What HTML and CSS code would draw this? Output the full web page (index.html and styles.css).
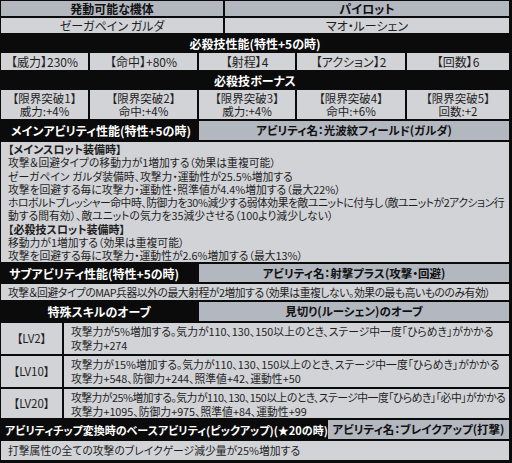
FILE: index.html
```html
<!DOCTYPE html>
<html lang="ja">
<head>
<meta charset="utf-8">
<link rel="stylesheet" href="styles.css">
</head>
<body>
<div class="sheet">
  <div class="grid g-top">
    <div class="c hd">発動可能な機体</div>
    <div class="c hd">パイロット</div>
    <div class="c lt ctr big">ゼーガペイン ガルダ</div>
    <div class="c lt ctr big">マオ・ルーシェン</div>
  </div>
  <div class="bar ctr h16">必殺技性能(特性+5の時)</div>
  <div class="grid g5 h17">
    <div class="c lt ctr big">【威力】230%</div>
    <div class="c lt ctr big">【命中】+80%</div>
    <div class="c lt ctr big">【射程】4</div>
    <div class="c lt ctr big">【アクション】2</div>
    <div class="c lt ctr big">【回数】6</div>
  </div>
  <div class="bar ctr h16">必殺技ボーナス</div>
  <div class="grid g5 h29">
    <div class="c lt ctr two">【限界突破1】<br>威力:+4%</div>
    <div class="c lt ctr two">【限界突破2】<br>命中:+4%</div>
    <div class="c lt ctr two">【限界突破3】<br>威力:+4%</div>
    <div class="c lt ctr two">【限界突破4】<br>命中:+6%</div>
    <div class="c lt ctr two">【限界突破5】<br>回数:+2</div>
  </div>
  <div class="grid g-split h19">
    <div class="bar left pl10">メインアビリティ性能(特性+5の時)</div>
    <div class="c hd sm">アビリティ名：光波紋フィールド(ガルダ)</div>
  </div>
  <div class="c lt body h120">
    <b>【メインスロット装備時】</b><br>
    攻撃＆回避タイプの移動力が1増加する（効果は重複可能）<br>
    ゼーガペイン ガルダ装備時、攻撃力・運動性が25.5%増加する<br>
    攻撃を回避する毎に攻撃力・運動性・照準値が4.4%増加する（最大22%）<br>
    <span class="tight">ホロボルトプレッシャー命中時、防御力を30%減少する弱体効果を敵ユニットに付与し（敵ユニットが2アクション行</span><br>
    動する間有効）、敵ユニットの気力を35減少させる（100より減少しない）<br>
    <b>【必殺技スロット装備時】</b><br>
    移動力が1増加する（効果は重複可能）<br>
    攻撃を回避する毎に攻撃力・運動性が2.6%増加する（最大13%）
  </div>
  <div class="grid g-split h18">
    <div class="bar left pl8">サブアビリティ性能(特性+5の時)</div>
    <div class="c hd sm">アビリティ名：射撃プラス(攻撃・回避)</div>
  </div>
  <div class="c lt line h16"><span class="tight">攻撃＆回避タイプのMAP兵器以外の最大射程が2増加する（効果は重複しない。効果の最も高いもののみ有効）</span></div>
  <div class="grid g-split h19">
    <div class="bar ctr">特殊スキルのオーブ</div>
    <div class="c hd sm">見切り(ルーシェン)のオーブ</div>
  </div>
  <div class="grid g-lv h31">
    <div class="c lt ctr lvk">【LV2】</div>
    <div class="c lt lv">攻撃力が5%増加する。気力が110、130、150以上のとき、ステージ中一度「ひらめき」がかかる<br>攻撃力+274</div>
  </div>
  <div class="grid g-lv h31">
    <div class="c lt ctr lvk">【LV10】</div>
    <div class="c lt lv">攻撃力が15%増加する。気力が110、130、150以上のとき、ステージ中一度「ひらめき」がかかる<br>攻撃力+548、防御力+244、照準値+42、運動性+50</div>
  </div>
  <div class="grid g-lv h29">
    <div class="c lt ctr lvk">【LV20】</div>
    <div class="c lt lv"><span class="tighter">攻撃力が25%増加する。気力が110、130、150以上のとき、ステージ中一度「ひらめき」「必中」がかかる</span><br>攻撃力+1095、防御力+975、照準値+84、運動性+99</div>
  </div>
  <div class="grid g-chip h19">
    <div class="bar left pl4 chip">アビリティチップ変換時のベースアビリティ(ピックアップ)(★20の時)</div>
    <div class="c hd sm">アビリティ名：ブレイクアップ(打撃)</div>
  </div>
  <div class="c lt line h19">打撃属性の全ての攻撃のブレイクゲージ減少量が25%増加する</div>
</div>
</body>
</html>
```

FILE: styles.css
```css
html, body {
  margin: 0;
  padding: 0;
  background: #0b0b0b;
}
body {
  font-family: "Noto Sans CJK JP", "Noto Sans", sans-serif;
  font-feature-settings: "palt";
  font-size: 11px;
  color: #1e1e1e;
}
.sheet {
  width: 512px;
  height: 463px;
  box-sizing: border-box;
  padding: 1px 3px 2px 1px;
  display: flex;
  flex-direction: column;
  gap: 2px;
  background: #0b0b0b;
}
.grid {
  display: grid;
  gap: 2px;
}
.g-top {
  grid-template-columns: 222px 1fr;
  grid-template-rows: 15px 15px;
}
.g5 {
  grid-template-columns: 87px 107px 96px 108px 1fr;
}
.g-split {
  grid-template-columns: 196px 1fr;
}
.g-lv {
  grid-template-columns: 61px 1fr;
}
.g-chip {
  grid-template-columns: 325px 1fr;
}
.c {
  display: flex;
  align-items: center;
  white-space: nowrap;
  overflow: hidden;
  line-height: 13px;
}
.big {
  font-size: 12px;
}
.hd {
  background: #b3b7bf;
  justify-content: center;
  font-weight: bold;
  font-size: 12px;
  color: #111;
}
.hd.sm {
  font-size: 11.5px;
}
.lt {
  background: #d2d3d7;
}
.ctr {
  justify-content: center;
  text-align: center;
}
.two {
  font-size: 11.5px;
  line-height: 13px;
}
.lvk {
  font-size: 11.5px;
}
.bar {
  background: #0b0b0b;
  color: #fff;
  font-weight: bold;
  font-size: 12px;
  display: flex;
  align-items: center;
  white-space: nowrap;
}
.bar.chip {
  font-size: 11px;
}
.left { justify-content: flex-start; }
.pl10 { padding-left: 10px; }
.pl8 { padding-left: 8px; }
.pl4 { padding-left: 4px; }
.body {
  display: block;
  padding: 1px 7px;
  line-height: 13.3px;
  font-size: 10.8px;
}
.body b { font-weight: bold; font-size: 11px; }
.line {
  padding-left: 7px;
  font-size: 10.8px;
}
.lv {
  display: block;
  padding: 1px 0 0 7px;
  line-height: 14px;
  font-size: 10.8px;
}
.tight { letter-spacing: -0.45px; }
.tighter { letter-spacing: -0.5px; }
.h16 { height: 16px; }
.h17 { height: 17px; }
.h18 { height: 18px; }
.h19 { height: 19px; }
.h29 { height: 29px; }
.h31 { height: 31px; }
.h120 { height: 120px; box-sizing: border-box; }
```
